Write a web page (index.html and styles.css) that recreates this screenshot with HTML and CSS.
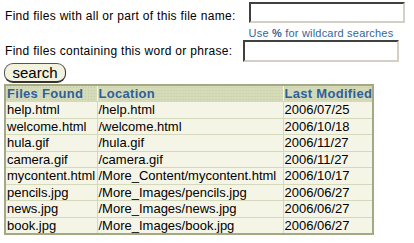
FILE: index.html
```html
<html>

<head>
    <meta charset="UTF-8">
    <title>File Search</title>
    <link rel="stylesheet" href="styles.css">
</head>

<body>
    <form class="search_form">
        <div class="row">
            <span class="label">Find files with all or part of this file name:</span>
            <div class="field">
                <input class="box" type="text">
                <span class="hint">Use <b>%</b> for wildcard searches</span>
            </div>
        </div>
        <div class="row" id="row_word">
            <span class="label">Find files containing this word or phrase:</span>
            <div class="field">
                <input class="box" type="text">
            </div>
        </div>
        <button class="search_button" type="button">search</button>
    </form>

    <table class="results">
        <colgroup>
            <col class="c_name">
            <col class="c_loc">
            <col class="c_date">
        </colgroup>
        <tr>
            <th>Files Found</th>
            <th>Location</th>
            <th>Last Modified</th>
        </tr>
        <tr><td>help.html</td><td>/help.html</td><td>2006/07/25</td></tr>
        <tr><td>welcome.html</td><td>/welcome.html</td><td>2006/10/18</td></tr>
        <tr><td>hula.gif</td><td>/hula.gif</td><td>2006/11/27</td></tr>
        <tr><td>camera.gif</td><td>/camera.gif</td><td>2006/11/27</td></tr>
        <tr><td>mycontent.html</td><td>/More_Content/mycontent.html</td><td>2006/10/17</td></tr>
        <tr><td>pencils.jpg</td><td>/More_Images/pencils.jpg</td><td>2006/06/27</td></tr>
        <tr><td>news.jpg</td><td>/More_Images/news.jpg</td><td>2006/06/27</td></tr>
        <tr><td>book.jpg</td><td>/More_Images/book.jpg</td><td>2006/06/27</td></tr>
    </table>
</body>

</html>
```

FILE: styles.css
```css
body {
    margin: 0;
    padding: 2px 4px;
    font-family: "Liberation Sans", Arial, sans-serif;
    font-size: 12px;
    color: #000;
    background: #fff;
}

form.search_form {
    margin: 0;
}

.row {
    display: flex;
    align-items: flex-start;
}

.label {
    padding-top: 7px;
    margin-left: 1px;
    margin-right: 13px;
    letter-spacing: 0.3px;
}

#row_word .label {
    padding-top: 4px;
    margin-right: 11px;
}

.field {
    display: flex;
    flex-direction: column;
}

.box {
    box-sizing: border-box;
    width: 156px;
    height: 21px;
    margin: 0;
    border: 2px solid;
    border-color: #404040 #d4d0c8 #d4d0c8 #404040;
    background: #fff;
}

#row_word .box {
    height: 22px;
}

.hint {
    margin-top: 4px;
    margin-bottom: 1px;
    font-size: 11px;
    letter-spacing: 0.2px;
    color: #336699;
}

.search_button {
    display: block;
    margin-top: 1px;
    width: 62px;
    height: 20px;
    padding: 0;
    border: 1px solid #555;
    border-right-color: #333;
    border-bottom: 2px solid #333;
    border-radius: 9px;
    background: #f2f2de;
    font-family: "Liberation Sans", Arial, sans-serif;
    font-size: 15px;
    line-height: 16px;
    color: #000;
}

table.results {
    margin-top: 1px;
    width: 368px;
    table-layout: fixed;
    border-collapse: collapse;
    border: 2px solid #a2a983;
    background: #f5f5e7;
    font-size: 13px;
}

col.c_name {
    width: 92px;
}

col.c_loc {
    width: 186px;
}

col.c_date {
    width: 90px;
}

table.results th,
table.results td {
    padding: 0 1px;
    height: 16.5px;
    line-height: 15px;
    text-align: left;
    white-space: nowrap;
    overflow: hidden;
    border: 1px solid #d4d9b9;
}

table.results th {
    font-weight: bold;
    color: #2f5f9b;
    letter-spacing: 0.3px;
    background-color: #d5dbb9;
    background-image: radial-gradient(#c4cba2 0.6px, transparent 0.8px);
    background-size: 3px 3px;
    border-color: #f5f5e7;
    border-top-color: #a2a983;
    border-bottom-color: #d4d9b9;
}

table.results th:first-child {
    border-left-color: #a2a983;
}

table.results th:last-child {
    border-right-color: #a2a983;
}
```
